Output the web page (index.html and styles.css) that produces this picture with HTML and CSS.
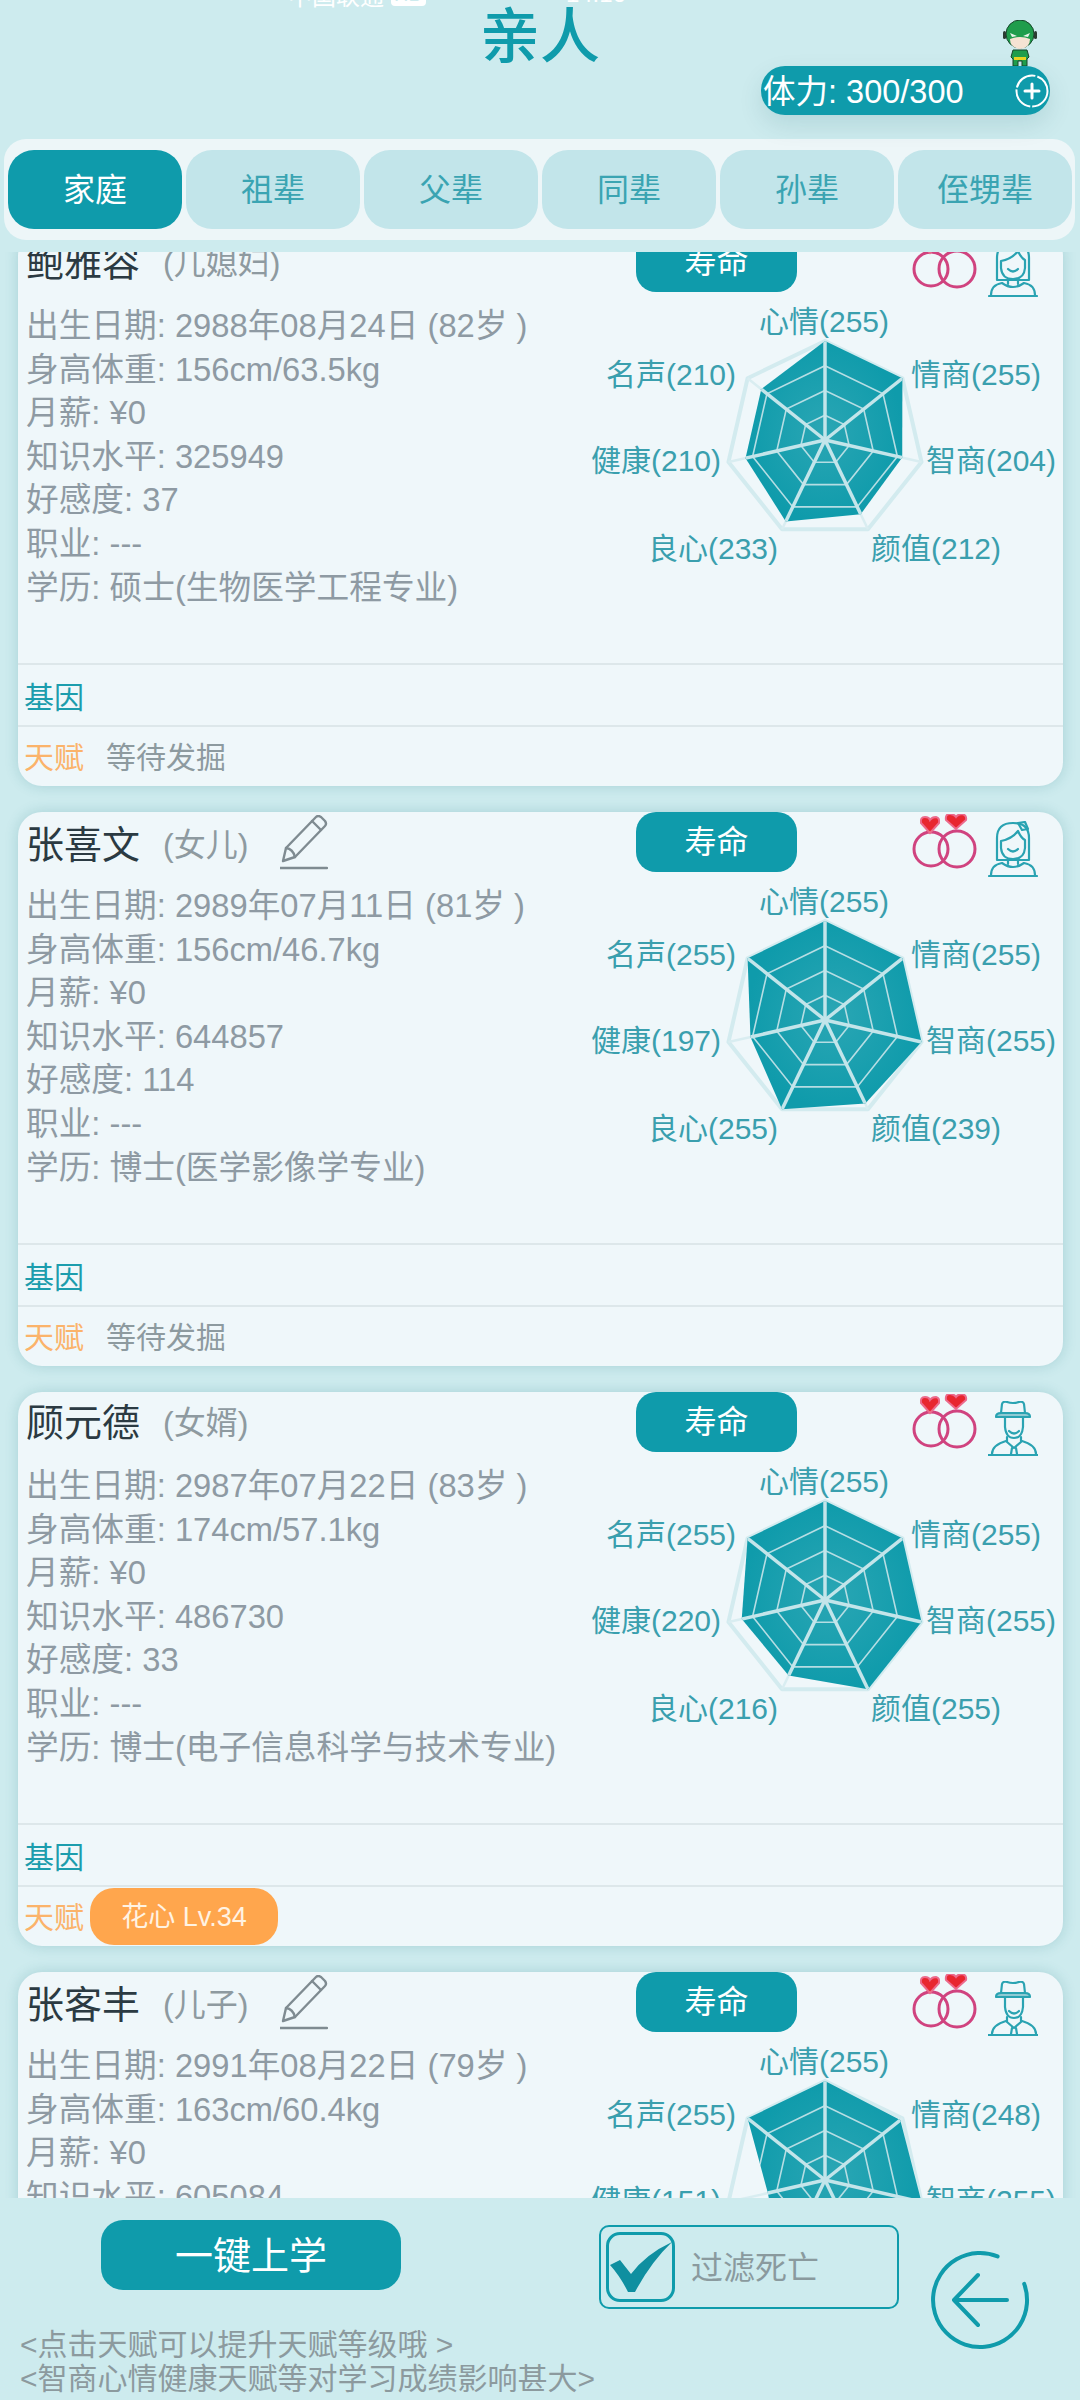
FILE: index.html
```html
<!DOCTYPE html>
<html lang="zh-CN">
<head>
  <meta charset="UTF-8">
  <meta name="viewport" content="width=device-width, initial-scale=1.0">
  <title>亲人</title>
  <link rel="stylesheet" href="styles.css">
</head>
<body>

  <svg class="sprites" width="0" height="0">
    <radialGradient id="radar-fill">
      <stop offset="0" stop-color="#2aa6b4"/>
      <stop offset="1" stop-color="#0f9bab"/>
    </radialGradient>
    <symbol id="icon-rings" viewBox="0 0 66 56">
      <circle cx="19" cy="35" r="17" fill="none" stroke="#d0437f" stroke-width="3"/>
      <circle cx="45" cy="35" r="18" fill="none" stroke="#d0437f" stroke-width="3"/>
      <path d="M18 19 L9 9 Q8 3 13 3 Q17 3 18 6 Q20 3 24 3 Q28 4 27 9 Z" fill="#e8262f" stroke="#ec6a8c" stroke-width="2"/>
      <path d="M44 15 L34 6 Q33 0 38 0 Q42 0 44 3 Q46 0 50 0 Q55 1 54 6 Z" fill="#e8262f" stroke="#ec6a8c" stroke-width="2"/>
    </symbol>
    <symbol id="icon-woman" viewBox="0 0 50 56">
      <g fill="none" stroke="#2aa3b2" stroke-width="2.2" stroke-linecap="round" stroke-linejoin="round">
        <path d="M9 39 V17 Q9 2 25 2 Q41 2 41 17 V39 Z"/>
        <path d="M13 20 Q24 18 30 10 Q33 17 37 19 V27 Q36 38 25 38 Q14 38 13 27 Z"/>
        <path d="M20 28 Q25 33 30 28"/>
        <path d="M30 2 L37 1 L40 8 L34 9 Z"/>
        <path d="M20 38 V43 M30 38 V43"/>
        <path d="M3 54 Q3 44 14 42 Q25 50 36 42 Q47 44 47 54"/>
        <path d="M1 55 H49"/>
      </g>
    </symbol>
    <symbol id="icon-man" viewBox="0 0 50 56">
      <g fill="none" stroke="#2aa3b2" stroke-width="2.2" stroke-linecap="round" stroke-linejoin="round">
        <path d="M13 12 L14 3 Q15 0 19 1 Q25 3 31 1 Q35 0 36 3 L37 12"/>
        <path d="M8 16 Q8 12 13 12 H37 Q42 12 42 16 Z" fill="#8fcad3"/>
        <path d="M17 17 V26 Q18 37 26 37 Q34 37 35 26 V17"/>
        <path d="M21 30 Q26 35 31 30"/>
        <path d="M19 36 V41 L26 47 L33 41 V36"/>
        <path d="M24 47 L23 53 M28 47 L29 53"/>
        <path d="M4 53 Q4 44 18 40 M48 53 Q48 44 34 40"/>
        <path d="M0 54 H50"/>
      </g>
    </symbol>
    <symbol id="icon-pencil" viewBox="0 0 48 56">
      <g fill="none" stroke="#7f8b91" stroke-width="2.4" stroke-linejoin="round" stroke-linecap="round">
        <path d="M3 46 L6 33 L36 2 Q38 0 41 2 L45 6 Q47 9 45 11 L15 42 Z"/>
        <path d="M6 33 Q13 34 15 42"/>
        <path d="M32 6 L41 15"/>
        <path d="M0 53 H47"/>
      </g>
    </symbol>
  </svg>

  <div class="status-strip">
    <span class="carrier">中国联通</span><span class="carrier-tag">HD</span><span class="clock">14:16</span>
  </div>

  <header class="top">
    <h1 class="title">亲人</h1>
    <div class="stamina">
      <svg class="hero" viewBox="0 0 36 46">
        <path d="M11 30 H25 L27 37 L25 39 V46 H20 V41 H16 V46 H11 V39 L9 37 Z" fill="#1f9d4c" stroke="#17452a" stroke-width="1"/>
        <rect x="12" y="37" width="12" height="3" fill="#e6d321"/>
        <circle cx="18" cy="14" r="14" fill="#1f9d4c" stroke="#17452a" stroke-width="1"/>
        <path d="M8 19 Q18 15 28 19 Q28 28 18 29 Q8 28 8 19 Z" fill="#f6e3d3"/>
        <path d="M8 13 L15 16 L10 17 Z M28 13 L21 16 L26 17 Z" fill="#e9f3ea"/>
        <rect x="1" y="11" width="3" height="8" rx="1.5" fill="#2b3a32"/>
        <rect x="32" y="11" width="3" height="8" rx="1.5" fill="#2b3a32"/>
      </svg>
      <span class="stamina-text">体力: 300/300</span>
      <svg class="plus" viewBox="0 0 34 34">
        <circle cx="17" cy="17" r="15.5" fill="none" stroke="#fff" stroke-width="2" stroke-dasharray="24 2"/>
        <path d="M10 17 H24 M17 10 V24" stroke="#fff" stroke-width="3" stroke-linecap="round"/>
      </svg>
    </div>
  </header>

  <nav class="tabs">
    <div class="tab active">家庭</div>
    <div class="tab">祖辈</div>
    <div class="tab">父辈</div>
    <div class="tab">同辈</div>
    <div class="tab">孙辈</div>
    <div class="tab">侄甥辈</div>
  </nav>

  <main class="list">
    <section class="card">
      <div class="card-head">
        <div class="who"><span class="name">鲍雅容</span><span class="relation">(儿媳妇)</span></div>
        <div class="life-btn">寿命</div>
        <div class="badges">
          <svg class="rings"><use href="#icon-rings"/></svg>
          <svg class="avatar"><use href="#icon-woman"/></svg>
        </div>
      </div>
      <div class="card-body">
        <ul class="info">
          <li>出生日期: 2988年08月24日 (82岁 )</li>
          <li>身高体重: 156cm/63.5kg</li>
          <li>月薪: ¥0</li>
          <li>知识水平: 325949</li>
          <li>好感度: 37</li>
          <li>职业: ---</li>
          <li>学历: 硕士(生物医学工程专业)</li>
        </ul>
        <svg class="radar" viewBox="0 0 480 300" data-values="255,255,204,212,233,210,210"></svg>
      </div>
      <div class="row gene">基因</div>
      <div class="row talent"><span class="talent-label">天赋</span><span class="talent-none">等待发掘</span></div>
    </section>

    <section class="card">
      <div class="card-head">
        <div class="who">
          <span class="name">张喜文</span><span class="relation">(女儿)</span>
          <svg class="pencil"><use href="#icon-pencil"/></svg>
        </div>
        <div class="life-btn">寿命</div>
        <div class="badges">
          <svg class="rings"><use href="#icon-rings"/></svg>
          <svg class="avatar"><use href="#icon-woman"/></svg>
        </div>
      </div>
      <div class="card-body">
        <ul class="info">
          <li>出生日期: 2989年07月11日 (81岁 )</li>
          <li>身高体重: 156cm/46.7kg</li>
          <li>月薪: ¥0</li>
          <li>知识水平: 644857</li>
          <li>好感度: 114</li>
          <li>职业: ---</li>
          <li>学历: 博士(医学影像学专业)</li>
        </ul>
        <svg class="radar" viewBox="0 0 480 300" data-values="255,255,255,239,255,197,255"></svg>
      </div>
      <div class="row gene">基因</div>
      <div class="row talent"><span class="talent-label">天赋</span><span class="talent-none">等待发掘</span></div>
    </section>

    <section class="card">
      <div class="card-head">
        <div class="who"><span class="name">顾元德</span><span class="relation">(女婿)</span></div>
        <div class="life-btn">寿命</div>
        <div class="badges">
          <svg class="rings"><use href="#icon-rings"/></svg>
          <svg class="avatar"><use href="#icon-man"/></svg>
        </div>
      </div>
      <div class="card-body">
        <ul class="info">
          <li>出生日期: 2987年07月22日 (83岁 )</li>
          <li>身高体重: 174cm/57.1kg</li>
          <li>月薪: ¥0</li>
          <li>知识水平: 486730</li>
          <li>好感度: 33</li>
          <li>职业: ---</li>
          <li>学历: 博士(电子信息科学与技术专业)</li>
        </ul>
        <svg class="radar" viewBox="0 0 480 300" data-values="255,255,255,255,216,220,255"></svg>
      </div>
      <div class="row gene">基因</div>
      <div class="row talent"><span class="talent-label">天赋</span><span class="talent-chip">花心 Lv.34</span></div>
    </section>

    <section class="card">
      <div class="card-head">
        <div class="who">
          <span class="name">张客丰</span><span class="relation">(儿子)</span>
          <svg class="pencil"><use href="#icon-pencil"/></svg>
        </div>
        <div class="life-btn">寿命</div>
        <div class="badges">
          <svg class="rings"><use href="#icon-rings"/></svg>
          <svg class="avatar"><use href="#icon-man"/></svg>
        </div>
      </div>
      <div class="card-body">
        <ul class="info">
          <li>出生日期: 2991年08月22日 (79岁 )</li>
          <li>身高体重: 163cm/60.4kg</li>
          <li>月薪: ¥0</li>
          <li>知识水平: 605084</li>
        </ul>
        <svg class="radar" viewBox="0 0 480 300" data-values="255,248,255,255,255,151,255"></svg>
      </div>
    </section>
  </main>

  <footer class="bottom">
    <div class="bottom-left">
      <div class="actions">
        <div class="study-btn">一键上学</div>
        <div class="filter">
          <div class="filter-box">
            <svg viewBox="0 0 63 64"><path d="M1 30 L11 25 L22 39 Q37 19 63 7 Q42 27 26 57 H19 Q11 41 1 30 Z" fill="#0f8fa0"/></svg>
          </div>
          <span class="filter-label">过滤死亡</span>
        </div>
      </div>
      <p class="tips">&lt;点击天赋可以提升天赋等级哦 &gt;<br>&lt;智商心情健康天赋等对学习成绩影响甚大&gt;</p>
    </div>
    <svg class="back" viewBox="0 0 100 100">
      <path d="M67.6 6.4 A47 47 0 1 0 94.2 33.9" fill="none" stroke="#0f9bab" stroke-width="4" stroke-linecap="round"/>
      <path d="M48 25 L24 50 L48 75 M24 50 H77" fill="none" stroke="#0f9bab" stroke-width="4" stroke-linecap="round" stroke-linejoin="round"/>
    </svg>
  </footer>

  <script src="script.js"></script>
</body>
</html>
```

FILE: styles.css
```css
* {
  box-sizing: border-box;
}

body {
  margin: 0;
  width: 1080px;
  height: 2400px;
  overflow: hidden;
  position: relative;
  background-color: #cdebee;
  font-family: "Liberation Sans", "Noto Sans CJK SC", sans-serif;
  display: flex;
  flex-direction: column;
}

.sprites {
  position: absolute;
}

/* leftovers of the phone status bar, cut off by the top edge */
.status-strip {
  position: absolute;
  top: -20px;
  left: 288px;
  display: flex;
  align-items: center;
  height: 28px;
  color: white;
  font-size: 24px;
}

.carrier-tag {
  margin-left: 7px;
  padding: 0 3px;
  background-color: white;
  color: #cdebee;
  border-radius: 4px;
  font-size: 20px;
}

.clock {
  margin-left: 140px;
}

.top {
  display: flex;
  flex-direction: column;
  height: 139px;
}

.title {
  margin: 0;
  height: 66px;
  line-height: 76px;
  text-align: center;
  font-size: 60px;
  font-weight: 500;
  color: #0f9bab;
}

.stamina {
  position: relative;
  align-self: flex-end;
  margin-right: 30px;
  width: 289px;
  height: 49px;
  padding-left: 2px;
  display: flex;
  align-items: center;
  justify-content: space-between;
  background-color: #0f9bab;
  border-radius: 24px;
  box-shadow: 0 10px 24px rgba(0, 80, 90, 0.12);
  color: white;
  font-size: 32.5px;
}

.stamina-text {
  margin-top: -4px;
}

.hero {
  position: absolute;
  top: -46px;
  right: 12px;
  width: 36px;
  height: 46px;
}

.plus {
  width: 34px;
  height: 34px;
  margin-right: 1px;
}

.tabs {
  margin: 0 5px 0 4px;
  height: 101px;
  padding: 11px 3px 11px 4px;
  display: flex;
  gap: 4px;
  background-color: #edf6f8;
  border-radius: 22px;
}

.tab {
  flex: 1;
  display: flex;
  align-items: center;
  justify-content: center;
  padding-bottom: 5px;
  background-color: #c2e5ea;
  border-radius: 26px;
  color: #3aa4b2;
  font-size: 32px;
}

.tab.active {
  background-color: #0f9bab;
  color: white;
}

.list {
  margin-top: 12px;
  height: 1946px;
  padding: 0 17px 0 18px;
  overflow: hidden;
  display: flex;
  flex-direction: column;
  gap: 26px;
}

.card {
  flex: none;
  height: 554px;
  background-color: #eff7fa;
  border-radius: 24px;
  box-shadow: 0 0 14px rgba(20, 110, 120, 0.2);
  overflow: hidden;
}

.card:first-child {
  margin-top: -20px;
}

.card-head {
  height: 64px;
  display: grid;
  grid-template-columns: 618px 161px 266px;
}

.who {
  display: flex;
  align-items: center;
  padding: 0 0 10px 8px;
}

.name {
  font-size: 38px;
  color: #2b3a42;
}

.relation {
  margin-left: 23px;
  font-size: 32px;
  color: #8e9aa0;
}

.pencil {
  align-self: flex-start;
  width: 48px;
  height: 56px;
  margin: 3px 0 0 32px;
}

.life-btn {
  height: 60px;
  display: flex;
  align-items: center;
  justify-content: center;
  padding-bottom: 6px;
  background-color: #0f9bab;
  border-radius: 20px;
  color: white;
  font-size: 32px;
}

.badges {
  display: flex;
  align-items: flex-start;
  justify-content: flex-end;
  gap: 10px;
  padding: 2px 25px 0 0;
}

.rings {
  width: 66px;
  height: 56px;
}

.avatar {
  width: 50px;
  height: 56px;
  margin-top: 7px;
}

.card-body {
  height: 367px;
  display: flex;
  justify-content: space-between;
}

.info {
  margin: 0;
  padding: 8px 0 0 8px;
  list-style: none;
  font-size: 32.7px;
  line-height: 43.6px;
  color: #8e9aa3;
  white-space: nowrap;
}

.radar {
  flex: none;
  width: 480px;
  height: 300px;
}

.radar-label {
  font-size: 30px;
  fill: #3a9fae;
  text-anchor: middle;
  dominant-baseline: central;
}

.radar-outer {
  fill: none;
  stroke: #d3ebef;
  stroke-width: 4;
  stroke-linejoin: round;
}

.radar-faint {
  stroke: #d9edf1;
  stroke-width: 2.5;
}

.radar-ring {
  fill: none;
  stroke: #b5dde3;
  stroke-width: 1.6;
}

.radar-spoke {
  stroke: #c3e5ea;
  stroke-width: 3.5;
}

.row {
  height: 62px;
  padding-left: 6px;
  display: flex;
  align-items: center;
  border-top: 2px solid #dde7ea;
  font-size: 30px;
}

.gene {
  color: #1c9dad;
}

.talent {
  padding-bottom: 5px;
}

.talent-label {
  color: #fbb36a;
}

.talent-none {
  margin-left: 22px;
  color: #8d9a9f;
}

.talent-chip {
  align-self: flex-start;
  margin: 1px 0 0 6px;
  width: 188px;
  height: 57px;
  display: flex;
  align-items: center;
  justify-content: center;
  padding-bottom: 4px;
  background-color: #ffa64d;
  border-radius: 24px;
  color: #fff3e3;
  font-size: 27px;
}

.bottom {
  flex: 1;
  display: flex;
  justify-content: space-between;
  background-color: #cdebee;
}

.bottom-left {
  padding: 22px 0 0 20px;
}

.actions {
  display: flex;
  align-items: flex-start;
}

.study-btn {
  margin-left: 81px;
  width: 300px;
  height: 70px;
  display: flex;
  align-items: center;
  justify-content: center;
  padding-bottom: 6px;
  background-color: #0f9bab;
  border-radius: 22px;
  color: white;
  font-size: 38px;
}

.filter {
  margin: 5px 0 0 198px;
  width: 300px;
  height: 84px;
  padding-left: 5px;
  display: flex;
  align-items: center;
  border: 2px solid #0f9bab;
  border-radius: 10px;
  color: #8a9a9e;
  font-size: 32px;
}

.filter-label {
  margin-top: -5px;
}

.filter-box {
  width: 69px;
  height: 70px;
  margin-right: 16px;
  border: 3px solid #0f9bab;
  border-radius: 14px;
}

.filter-box svg {
  display: block;
  width: 100%;
  height: 100%;
}

.tips {
  margin: 19px 0 0;
  font-size: 30px;
  line-height: 34px;
  color: #8c9a9e;
  white-space: nowrap;
}

.back {
  flex: none;
  width: 100px;
  height: 100px;
  margin: 52px 50px 0 0;
  overflow: visible;
}
```

FILE: script.js
```js
// Draws the seven-sided radar of each relative from its data-values
const LABELS = ['心情', '情商', '智商', '颜值', '良心', '健康', '名声'];
const LABEL_POS = [[241, 25], [393, 78], [408, 164], [353, 252], [130, 252], [73, 164], [88, 78]];
const CX = 242;
const CY = 144;
const R = 99;
const NS = 'http://www.w3.org/2000/svg';

function point(i, r) {
  const a = i * 2 * Math.PI / 7;
  return [CX + r * Math.sin(a), CY - r * Math.cos(a)];
}

function add(parent, tag, cls, attrs) {
  const el = document.createElementNS(NS, tag);
  el.setAttribute('class', cls);
  for (const key in attrs) {
    el.setAttribute(key, attrs[key]);
  }
  parent.appendChild(el);
  return el;
}

function ringPoints(r) {
  return LABELS.map((_, i) => point(i, r).join(',')).join(' ');
}

document.querySelectorAll('.radar').forEach((svg, n) => {
  const values = svg.dataset.values.split(',').map(Number);
  const area = values.map((v, i) => point(i, R * v / 255).join(',')).join(' ');

  // pale web behind, the lighter lines only show on top of the filled area
  add(svg, 'polygon', 'radar-outer', { points: ringPoints(R) });
  values.forEach((v, i) => {
    const [x, y] = point(i, R);
    add(svg, 'line', 'radar-faint', { x1: CX, y1: CY, x2: x, y2: y });
  });
  add(svg, 'polygon', 'radar-area', { points: area, fill: 'url(#radar-fill)' });

  const clip = add(svg, 'clipPath', 'radar-clip', { id: 'radar-clip-' + n });
  add(clip, 'polygon', '', { points: area });
  const web = add(svg, 'g', 'radar-web', { 'clip-path': 'url(#radar-clip-' + n + ')' });
  [0.25, 0.5, 0.75].forEach(f => {
    add(web, 'polygon', 'radar-ring', { points: ringPoints(R * f) });
  });

  values.forEach((v, i) => {
    const [x, y] = point(i, R);
    add(web, 'line', 'radar-spoke', { x1: CX, y1: CY, x2: x, y2: y });
    const label = add(svg, 'text', 'radar-label', { x: LABEL_POS[i][0], y: LABEL_POS[i][1] });
    label.textContent = LABELS[i] + '(' + v + ')';
  });
});
```
